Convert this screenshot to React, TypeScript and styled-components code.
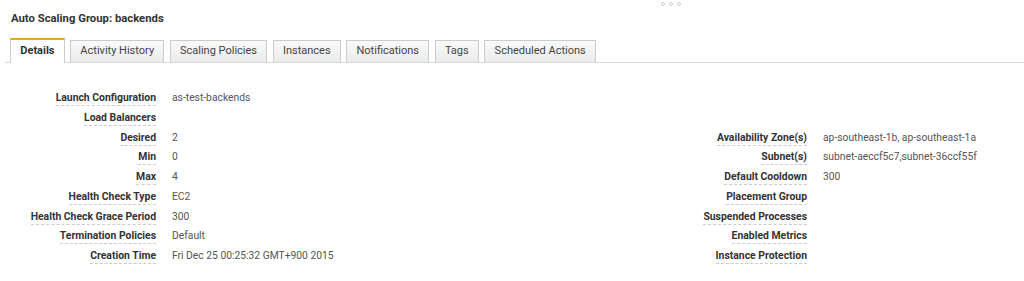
import React from "react";
import styled, { createGlobalStyle } from "styled-components";

const GlobalStyle = createGlobalStyle`
  body {
    margin: 0;
    background: #ffffff;
    font-family: Roboto, "Liberation Sans", Arial, sans-serif;
    color: #333;
  }
`;

const Page = styled.div`
  width: 1024px;
  height: 281px;
  overflow: hidden;
`;

const Header = styled.div`
  position: relative;
  height: 38px;
  box-sizing: border-box;
  padding: 12px 0 0 11px;
`;

const Title = styled.h1`
  margin: 0;
  font-size: 11.3px;
  line-height: 14px;
  font-weight: 700;
  color: #333;
`;

const Grip = styled.div`
  position: absolute;
  left: 661px;
  top: 2px;
  display: flex;
  gap: 4px;
`;

const GripDot = styled.span`
  width: 4px;
  height: 4px;
  box-sizing: border-box;
  border-radius: 50%;
  border: 1px solid #cfcfcf;
`;

const TabBar = styled.div`
  display: flex;
  align-items: flex-end;
  gap: 5.3px;
  height: 24px;
  margin-left: 5px;
  padding-left: 5px;
  border-bottom: 1px solid #d9d9d9;
`;

const Tab = styled.div<{ $active?: boolean }>`
  box-sizing: border-box;
  padding: 0 9.3px;
  font-size: 11px;
  white-space: nowrap;
  border: 1px solid #cccccc;
  border-bottom: none;
  ${(p) =>
    p.$active
      ? `
    border-top: 2px solid #f0a030;
    background: #ffffff;
    color: #333;
    font-weight: 700;
    line-height: 21px;
    padding-bottom: 2px;
    margin-bottom: -1px;
  `
      : `
    background: linear-gradient(#fafafa, #ebebeb);
    color: #444;
    line-height: 19px;
    padding-bottom: 2px;
  `}
`;

const Details = styled.div`
  padding: 26px 0 0 10px;
  font-size: 10.4px;
  line-height: 12px;
`;

const Columns = styled.div`
  display: grid;
  grid-template-columns: 651px 1fr;
`;

const Row = styled.div`
  display: grid;
  grid-template-columns: 146px 1fr;
  column-gap: 16px;
  height: 19.75px;
  align-items: start;
  padding-top: 3px;
  box-sizing: border-box;
`;

const LabelCell = styled.div`
  text-align: right;
`;

const Label = styled.span`
  display: inline-block;
  font-weight: 700;
  color: #333;
  padding-bottom: 1px;
  border-bottom: 1px dashed #cccccc;
`;

const Value = styled.div`
  color: #555;
  font-size: 10.3px;
  white-space: nowrap;
`;

type Field = [string, string];

const tabs = [
  "Details",
  "Activity History",
  "Scaling Policies",
  "Instances",
  "Notifications",
  "Tags",
  "Scheduled Actions",
];

const topFields: Field[] = [
  ["Launch Configuration", "as-test-backends"],
  ["Load Balancers", ""],
];

const leftFields: Field[] = [
  ["Desired", "2"],
  ["Min", "0"],
  ["Max", "4"],
  ["Health Check Type", "EC2"],
  ["Health Check Grace Period", "300"],
  ["Termination Policies", "Default"],
  ["Creation Time", "Fri Dec 25 00:25:32 GMT+900 2015"],
];

const rightFields: Field[] = [
  ["Availability Zone(s)", "ap-southeast-1b, ap-southeast-1a"],
  ["Subnet(s)", "subnet-aeccf5c7,subnet-36ccf55f"],
  ["Default Cooldown", "300"],
  ["Placement Group", ""],
  ["Suspended Processes", ""],
  ["Enabled Metrics", ""],
  ["Instance Protection", ""],
];

const FieldRows: React.FC<{ fields: Field[] }> = ({ fields }) => (
  <div>
    {fields.map(([label, value]) => (
      <Row key={label}>
        <LabelCell>
          <Label>{label}</Label>
        </LabelCell>
        <Value>{value}</Value>
      </Row>
    ))}
  </div>
);

export default function App() {
  return (
    <Page>
      <GlobalStyle />
      <Header>
        <Title>Auto Scaling Group: backends</Title>
        <Grip>
          <GripDot />
          <GripDot />
          <GripDot />
        </Grip>
      </Header>
      <TabBar>
        {tabs.map((t, i) => (
          <Tab key={t} $active={i === 0}>
            {t}
          </Tab>
        ))}
      </TabBar>
      <Details>
        <FieldRows fields={topFields} />
        <Columns>
          <FieldRows fields={leftFields} />
          <FieldRows fields={rightFields} />
        </Columns>
      </Details>
    </Page>
  );
}
